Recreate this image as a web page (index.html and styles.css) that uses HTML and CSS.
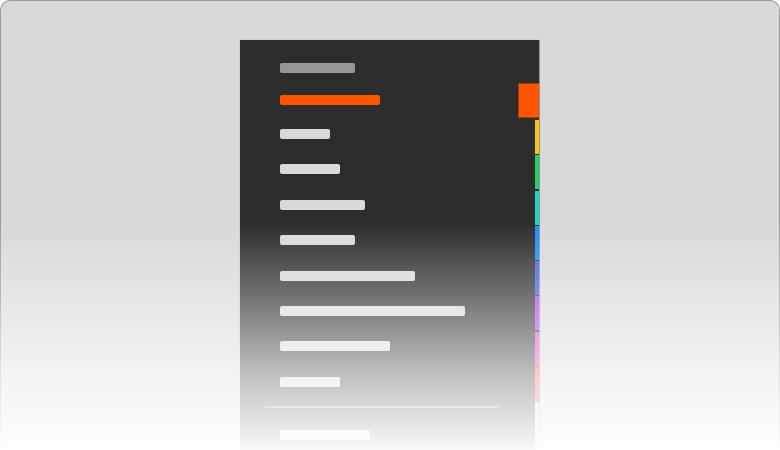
FILE: index.html
```html
<!DOCTYPE html>
<html>
<head>
<meta charset="utf-8">
<link rel="stylesheet" href="styles.css">
</head>
<body>
<div class="stage">
  <div class="frame">
    <div class="panel">
      <div class="menu">
        <span class="bar bar-head" style="width:75px"></span>
        <span class="bar bar-active" style="width:100px"></span>
        <span class="bar bar-first" style="width:50px"></span>
        <span class="bar" style="width:60px"></span>
        <span class="bar" style="width:85px"></span>
        <span class="bar" style="width:75px"></span>
        <span class="bar" style="width:135px"></span>
        <span class="bar" style="width:185px"></span>
        <span class="bar" style="width:110px"></span>
        <span class="bar" style="width:60px"></span>
        <span class="divider"></span>
        <span class="bar bar-after" style="width:90px"></span>
      </div>
      <div class="tabs">
        <span class="tab-active"></span>
        <span class="strip yellow"></span>
        <span class="strip green"></span>
        <span class="strip teal"></span>
        <span class="strip blue"></span>
        <span class="strip indigo"></span>
        <span class="strip purple"></span>
        <span class="strip pink"></span>
        <span class="strip salmon"></span>
        <span class="strip rest"></span>
      </div>
    </div>
  </div>
  <div class="fade"></div>
</div>
</body>
</html>
```

FILE: styles.css
```css
html, body {
  margin: 0;
  padding: 0;
  background: #ffffff;
  font-family: "Liberation Sans", Arial, sans-serif;
}

.stage {
  position: relative;
  width: 780px;
  height: 450px;
  overflow: hidden;
}

.frame {
  box-sizing: border-box;
  width: 780px;
  height: 450px;
  border: 1px solid #9a9a9a;
  border-bottom: none;
  border-radius: 10px 10px 0 0;
  background: #d9d9d9;
  overflow: hidden;
  display: flex;
  padding: 39px 0 0 239px;
}

.panel {
  width: 299px;
  height: 440px;
  flex-shrink: 0;
  background: #2d2d2b;
  display: flex;
  box-shadow: 1px 0 0 #949494, 0 0 2px rgba(0, 0, 0, 0.18);
}

.menu {
  flex: 1;
  display: flex;
  flex-direction: column;
  align-items: flex-start;
  padding: 23px 0 0 40px;
}

.bar {
  display: block;
  height: 10px;
  border-radius: 2px;
  background: #d9d9d9;
  margin-top: 25.4px;
  flex-shrink: 0;
}

.bar-head {
  margin-top: 0;
  background: #979797;
}

.bar-active {
  margin-top: 22px;
  background: #ff5500;
}

.bar-first {
  margin-top: 24px;
}

.divider {
  display: block;
  width: 233px;
  height: 2px;
  margin: 19px 0 0 -15px;
  background: #7a7a7a;
  flex-shrink: 0;
}

.bar-after {
  margin-top: 22px;
}

.tabs {
  width: 21px;
  flex-shrink: 0;
  display: flex;
  flex-direction: column;
  align-items: flex-end;
  padding-top: 43px;
  gap: 1.3px;
}

.tab-active {
  display: block;
  box-sizing: border-box;
  width: 21px;
  height: 35px;
  background: #ff5500;
  border: 1px solid #9c3d12;
  border-right: none;
  margin-bottom: 0.7px;
}

.strip {
  display: block;
  width: 4px;
  height: 34px;
  flex-shrink: 0;
}

.yellow { background: #ffc30d; }
.green { background: #20d062; }
.teal { background: #1cd6c6; }
.blue { background: #168eff; }
.indigo { background: #3f5ef0; }
.purple { background: #b040ee; }
.pink { background: #f03ec0; }
.salmon { background: #ff4c4c; }
.rest { background: #d6d6d6; height: 50px; }

.fade {
  position: absolute;
  left: 0;
  top: 0;
  width: 780px;
  height: 450px;
  pointer-events: none;
  background: linear-gradient(to bottom,
    rgba(255, 255, 255, 0) 0,
    rgba(255, 255, 255, 0) 222px,
    rgba(255, 255, 255, 0.35) 300px,
    rgba(255, 255, 255, 0.7) 375px,
    rgba(255, 255, 255, 0.97) 450px);
}
```
